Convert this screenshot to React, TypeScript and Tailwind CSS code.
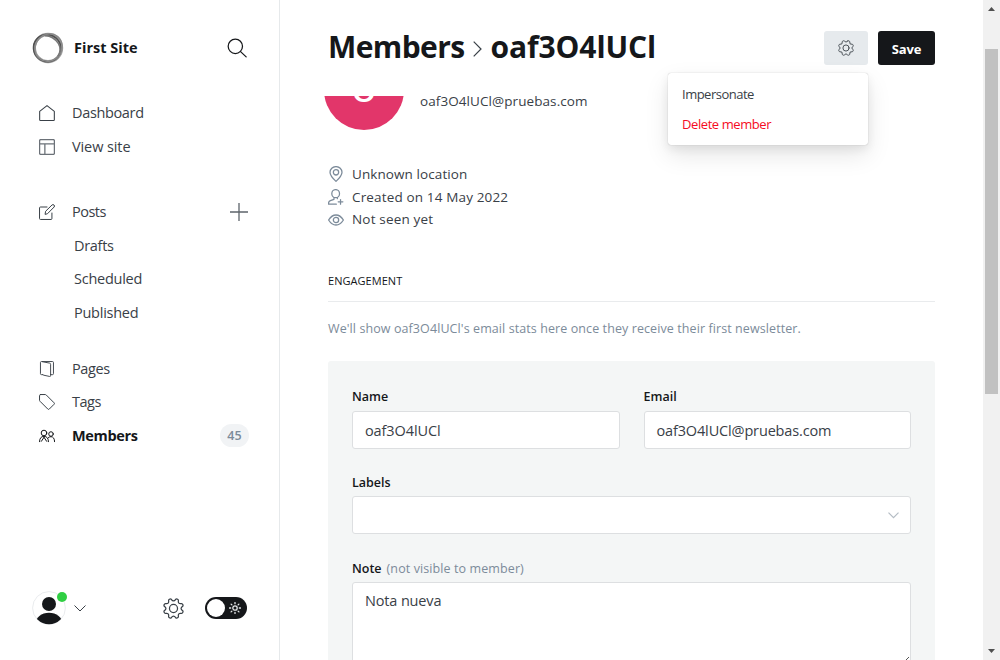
import React from "react";

const polar = (r: number, deg: number) => {
  const a = (deg * Math.PI) / 180;
  return `${(12 + r * Math.sin(a)).toFixed(2)} ${(12 - r * Math.cos(a)).toFixed(2)}`;
};

const cogPath =
  Array.from({ length: 8 }, (_, i) => {
    const t = 22.5 + i * 45;
    return (
      `${i === 0 ? "M" : "L"}${polar(10.8, t - 9)} Q${polar(11.7, t - 6)} ${polar(11.5, t)} ` +
      `Q${polar(11.7, t + 6)} ${polar(10.8, t + 9)} Q${polar(6.8, t + 22.5)} ${polar(10.8, t + 36)}`
    );
  }).join(" ") + "Z";

type IconProps = { className?: string; children: React.ReactNode; sw?: number };

function Icon({ className = "", children, sw = 1.6 }: IconProps) {
  return (
    <svg
      viewBox="0 0 24 24"
      fill="none"
      stroke="currentColor"
      strokeWidth={sw}
      strokeLinecap="round"
      strokeLinejoin="round"
      className={`shrink-0 ${className}`}
    >
      {children}
    </svg>
  );
}

function Cog({ className, sw }: { className: string; sw: number }) {
  return (
    <Icon className={className} sw={sw}>
      <path d={cogPath} />
      <circle cx="12" cy="12" r="4.6" />
    </Icon>
  );
}

function NavItem({ icon, label, text, end }: { icon?: React.ReactNode; label: string; text: string; end?: React.ReactNode }) {
  return (
    <a className="flex h-[33.5px] items-center pr-[31px] pl-[39px] text-[#394047]">
      {icon && <span className="mr-[17px] flex w-4 justify-center">{icon}</span>}
      <span className={text}>{label}</span>
      {end && <span className="ml-auto flex">{end}</span>}
    </a>
  );
}

function Sidebar() {
  return (
    <nav className="flex w-[280px] shrink-0 flex-col border-r border-[#e6e9eb] bg-white">
      <div className="flex h-24 items-center pr-8 pl-8">
        <svg viewBox="0 0 32 32" className="h-8 w-8 shrink-0" fill="none">
          <circle cx="16" cy="16" r="13.6" stroke="#a0a0a0" strokeWidth="3.2" />
          <ellipse cx="15.2" cy="16.2" rx="13.8" ry="13.4" stroke="#505050" strokeWidth="1.6" transform="rotate(40 15.2 16.2)" />
          <ellipse cx="16.5" cy="15.6" rx="14.3" ry="13" stroke="#8a8a8a" strokeWidth="1.4" transform="rotate(-50 16.5 15.6)" />
          <path d="M13 3.600C19 3.400 23 6.500 26.500 11.500C28.500 15 28.500 20 26 24" stroke="#777" strokeWidth="1.6" />
        </svg>
        <span className="ml-[10px] text-[14.5px] font-bold text-[#15171a]">First Site</span>
        <Icon className="ml-auto h-5 w-5 text-[#15171a]" sw={1.5}>
          <circle cx="10" cy="10" r="8.6" />
          <path d="M16.3 16.3L23 22.6" />
        </Icon>
      </div>
      <div className="mt-[0.5px] flex flex-col">
        <NavItem
          label="Dashboard"
          text="text-[14.5px] tracking-[-0.35px]"
          icon={
            <Icon className="h-4 w-4">
              <path d="M1 9.5L12 0.9L23 9.5V22Q23 23.2 21.8 23.2H2.2Q1 23.2 1 22Z" />
            </Icon>
          }
        />
        <NavItem
          label="View site"
          text="text-[14.5px] tracking-[-0.1px]"
          icon={
            <Icon className="h-4 w-4 text-[#6b7178]" sw={1.9}>
              <path d="M2.5 0.9H21.5Q23.1 0.9 23.1 2.5V21.5Q23.1 23.1 21.5 23.1H2.5Q0.9 23.1 0.9 21.5V2.5Q0.9 0.9 2.5 0.9ZM0.9 7.2H23.1M8.8 7.2V23" />
            </Icon>
          }
        />
      </div>
      <div className="mt-8 flex flex-col">
        <NavItem
          label="Posts"
          text="text-[14.5px] tracking-[-0.5px]"
          icon={
            <Icon className="h-4 w-4" sw={1.5}>
              <path d="M12 4.5H2.2Q0.8 4.5 0.8 5.9V21.8Q0.8 23.2 2.2 23.2H18Q19.4 23.2 19.4 21.8V13.5M9.2 15L9.9 10.9L19.6 1.4Q21 0.3 22.5 1.5Q23.9 3 22.7 4.5L13.1 14.2Z" />
            </Icon>
          }
          end={
            <svg viewBox="0 0 18 18" className="h-[18px] w-[18px]" stroke="#5d646b" strokeWidth="1.3">
              <path d="M9 0V18M0 9H18" />
            </svg>
          }
        />
        <div className="-mt-[0.2px] flex flex-col pl-[35px]">
          <NavItem label="Drafts" text="text-[14.5px] tracking-[-0.3px]" />
          <NavItem label="Scheduled" text="text-[14.5px] tracking-[-0.25px]" />
          <NavItem label="Published" text="text-[14.5px] tracking-[-0.25px]" />
        </div>
      </div>
      <div className="mt-[22.5px] flex flex-col">
        <NavItem
          label="Pages"
          text="text-[14.5px] tracking-[-0.4px]"
          icon={
            <Icon className="h-4 w-4" sw={1.4}>
              <path d="M5.5 20.5H3.8Q2.2 20.5 2.2 19V2.3Q2.2 0.8 3.8 0.8L16 3.2Q17.4 3.5 17.4 5V21.8Q17.4 23.5 16 23.2L7 21.3Q5.5 21 5.5 20.5M5 0.8H20.2Q21.7 0.8 21.7 2.3V19Q21.7 20.5 20.2 20.5H17.5" />
            </Icon>
          }
        />
        <NavItem
          label="Tags"
          text="text-[14.5px] tracking-[-0.5px]"
          icon={
            <Icon className="h-4 w-4" sw={1.5}>
              <path d="M2.3 0.8H9.2Q10.2 0.8 11 1.6L22.6 13.2Q23.7 14.3 22.6 15.4L15.4 22.6Q14.3 23.7 13.2 22.6L1.6 11Q0.8 10.2 0.8 9.2V2.3Q0.8 0.8 2.3 0.8Z" />
            </Icon>
          }
        />
        <NavItem
          label="Members"
          text="text-[14.5px] font-bold tracking-[-0.35px] text-[#15171a]"
          icon={
            <Icon className="h-4 w-4 text-[#15171a]" sw={1.5}>
              <circle cx="7.5" cy="7.5" r="4.2" />
              <circle cx="18" cy="9" r="3.4" />
              <path d="M0.8 20.5Q1 12.5 7.5 12.5Q14 12.5 14.2 20.5M14 14.5Q15.5 13 18 13Q23.2 13.2 23.4 20.5M7.5 14L3.5 20M7.5 14L11.5 20" />
            </Icon>
          }
          end={
            <span className="-mr-px flex h-[23px] w-[29px] items-center justify-center rounded-full bg-[#f1f3f5] pt-[2px] text-[12.5px] font-semibold text-[#7c8b9a]">
              45
            </span>
          }
        />
      </div>
      <div className="mt-auto mb-[35px] flex h-[34px] items-center pr-8 pl-8">
        <div className="relative h-[34px] w-[34px]">
          <svg viewBox="0 0 34 34" className="h-[34px] w-[34px]">
            <clipPath id="user">
              <circle cx="17" cy="17" r="16.3" />
            </clipPath>
            <circle cx="17" cy="17" r="16.4" fill="#fff" stroke="#e3e6e9" strokeWidth="0.8" />
            <circle cx="17" cy="13" r="7" fill="#15171a" />
            <ellipse cx="17" cy="33" rx="13.6" ry="11.3" fill="#15171a" clipPath="url(#user)" />
          </svg>
          <span className="absolute top-[1px] left-[25px] h-[10px] w-[10px] rounded-full bg-[#30cf43]" />
        </div>
        <svg viewBox="0 0 12 7" className="ml-2 h-[7px] w-3" fill="none" stroke="#394047" strokeWidth="1">
          <path d="M0.5 0.5L6 6L11.5 0.5" />
        </svg>
        <Cog className="ml-[76.5px] h-[21px] w-[21px] text-[#394047]" sw={1.4} />
        <div className="ml-auto flex h-[22px] w-[42px] items-center rounded-full bg-[#15171a] pr-[6px] pl-[2px]">
          <span className="h-[18px] w-[18px] rounded-full bg-white" />
          <svg viewBox="0 0 12 12" className="ml-auto h-3 w-3" fill="none" stroke="#e4e6e8" strokeWidth="1.3" strokeLinecap="round">
            <circle cx="6" cy="6" r="2.2" />
            <path d="M6 0.5V1.7M6 10.3V11.5M0.5 6H1.7M10.3 6H11.5M2.1 2.1L2.9 2.9M9.1 9.1L9.9 9.9M2.1 9.9L2.9 9.1M9.1 2.9L9.9 2.1" />
          </svg>
        </div>
      </div>
    </nav>
  );
}

function Header() {
  return (
    <header className="relative z-10 flex h-24 shrink-0 items-center pr-12 pl-12">
      <h1 className="-mt-[2px] flex items-center text-[30px] leading-none font-bold text-[#15171a]">
        <span className="tracking-[-0.6px]">Members</span>
        <svg viewBox="0 0 9 16" className="mt-[4px] mr-[9px] ml-[8px] h-4 w-[9px]" fill="none" stroke="#394047" strokeWidth="1.2">
          <path d="M0.7 0.7L8 8L0.7 15.3" />
        </svg>
        <span className="tracking-[-0.1px]">oaf3O4lUCl</span>
      </h1>
      <div className="relative ml-auto flex gap-[10px]">
        <button className="flex h-[34px] w-11 items-center justify-center rounded-[3px] bg-[#e6eaed]">
          <Cog className="h-4 w-4 text-[#4c5359]" sw={1.5} />
        </button>
        <button className="flex h-[34px] w-[57px] items-center justify-center rounded-[3px] bg-[#15171a] pt-[3px] text-[13px] font-bold tracking-[-0.2px] text-white">
          Save
        </button>
        <div className="absolute top-[42px] right-[67px] flex h-[72px] w-[200px] flex-col justify-center rounded-[3px] bg-white px-[14px] pt-[2px] text-[13px] shadow-[0_0_1px_rgba(0,0,0,0.32),0_4px_10px_rgba(0,0,0,0.07),0_10px_24px_rgba(0,0,0,0.1)]">
          <span className="flex h-[30px] items-center tracking-[-0.5px] text-[#394047]">Impersonate</span>
          <span className="flex h-[30px] items-center tracking-[-0.42px] text-[#f50b23]">Delete member</span>
        </div>
      </div>
    </header>
  );
}

function Info({ icon, text, tracking }: { icon: React.ReactNode; text: string; tracking: string }) {
  return (
    <div className="flex h-[22.7px] items-center">
      <span className="mr-2 flex w-4 justify-center text-[#7c8b9a]">{icon}</span>
      <span className={`text-[13.5px] text-[#394047] ${tracking}`}>{text}</span>
    </div>
  );
}

const field = "h-[38px] w-full rounded-[3px] border border-[#dddfe1] bg-white px-3 text-[14.5px] text-[#394047]";
const label = "flex h-5 items-center pt-[3px] text-[12.5px] font-semibold text-[#15171a]";

function MemberDetails() {
  return (
    <div className="min-h-0 flex-1 overflow-hidden pr-12 pl-12">
      <div className="-mt-[46px] -ml-1 flex h-20">
        <div className="flex h-20 w-20 items-center justify-center rounded-full bg-[#e2366a] text-[31px] font-semibold text-white">O</div>
        <span className="mt-[41px] ml-4 text-[13.5px] tracking-[0.08px] text-[#394047]">oaf3O4lUCl@pruebas.com</span>
      </div>
      <div className="mt-[32.8px] flex flex-col">
        <Info
          text="Unknown location"
          tracking="tracking-[0.09px]"
          icon={
            <Icon className="h-4 w-4" sw={1.9}>
              <path d="M12 23.1C8 19.5 3 14.5 3 9.5A9 8.6 0 0 1 21 9.5C21 14.5 16 19.5 12 23.1Z" />
              <circle cx="12" cy="9.5" r="4" />
            </Icon>
          }
        />
        <Info
          text="Created on 14 May 2022"
          tracking="tracking-[0.15px]"
          icon={
            <Icon className="h-4 w-4" sw={1.9}>
              <ellipse cx="11.5" cy="7" rx="5.8" ry="6.1" />
              <path d="M9 12.8V15.5L3.5 17.5Q0.9 18.6 0.9 21V22.8H12.5M18.8 15.8V22.8M15.3 19.3H22.3M14 12.8V14.5" />
            </Icon>
          }
        />
        <Info
          text="Not seen yet"
          tracking="tracking-[0.18px]"
          icon={
            <Icon className="h-4 w-4" sw={1.9}>
              <path d="M0.9 12C4 7 8 4.5 12 4.5S20 7 23.1 12C20 17 16 19.5 12 19.5S4 17 0.9 12Z" />
              <circle cx="12" cy="12" r="4" />
            </Icon>
          }
        />
      </div>
      <div className="mt-[39.7px] flex h-[31px] items-start border-b border-[#e9ebed] text-[11px] font-medium text-[#15171a]">
        <span className="leading-[20px] tracking-[0.05px]">ENGAGEMENT</span>
      </div>
      <p className="mt-4 text-[12.5px] leading-[22px] tracking-[0.09px] whitespace-nowrap text-[#7c8b9a]">
        We'll show oaf3O4lUCl's email stats here once they receive their first newsletter.
      </p>
      <section className="mt-[21px] flex h-[400px] flex-col rounded-[3px] bg-[#f4f6f6] px-6 pt-[25px]">
        <div className="grid grid-cols-2 gap-6">
          <div>
            <div className={label}>Name</div>
            <div className={`mt-[5px] flex items-center pt-[2px] tracking-[-0.1px] ${field}`}>oaf3O4lUCl</div>
          </div>
          <div>
            <div className={label}>Email</div>
            <div className={`mt-[5px] flex items-center pt-[2px] tracking-[-0.15px] ${field}`}>oaf3O4lUCl@pruebas.com</div>
          </div>
        </div>
        <div className={`mt-[23px] ${label}`}>Labels</div>
        <div className={`mt-[4px] flex shrink-0 items-center justify-end pt-[2px] ${field}`}>
          <svg viewBox="0 0 11 7" className="-mr-px h-[7px] w-[11px]" fill="none" stroke="#b4bcc4" strokeWidth="1.2">
            <path d="M0.5 0.7L5.5 5.7L10.5 0.7" />
          </svg>
        </div>
        <div className={`mt-6 ${label}`}>
          Note<span className="ml-[5px] font-normal tracking-[0.1px] text-[#7c8b9a]">(not visible to member)</span>
        </div>
        <div className="mt-[4px] flex h-[84px] w-full shrink-0 rounded-[3px] border border-[#dddfe1] bg-white px-3 pt-[7px] text-[14.5px] tracking-[-0.15px] text-[#394047]">
          Nota nueva
          <svg viewBox="0 0 9 9" className="mt-auto -mr-3 ml-auto h-[9px] w-[9px]" stroke="#555" strokeWidth="1">
            <path d="M1 8L8 1M5 8L8 5" />
          </svg>
        </div>
      </section>
    </div>
  );
}

function Scrollbar() {
  return (
    <div className="flex w-[17px] shrink-0 flex-col items-center bg-[#f1f1f1]">
      <svg viewBox="0 0 17 17" className="h-[17px] w-[17px]" fill="#505050">
        <path d="M5 11L8.5 7L12 11Z" />
      </svg>
      <div className="mt-8 h-[345px] w-[13px] bg-[#c1c1c1]" />
      <svg viewBox="0 0 17 17" className="mt-auto h-[17px] w-[17px]" fill="#505050">
        <path d="M5 6L8.5 10L12 6Z" />
      </svg>
    </div>
  );
}

export default function App() {
  return (
    <div className="flex h-[660px] w-[1000px] overflow-hidden bg-white font-['Open_Sans','Noto_Sans',sans-serif]">
      <Sidebar />
      <main className="flex min-w-0 flex-1 flex-col">
        <Header />
        <MemberDetails />
      </main>
      <Scrollbar />
    </div>
  );
}
